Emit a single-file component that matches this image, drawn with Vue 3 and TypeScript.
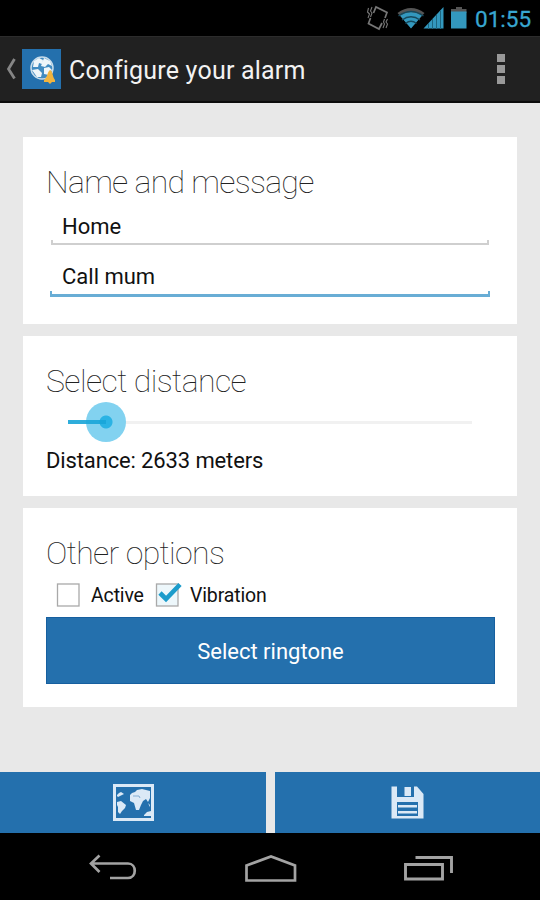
<script setup lang="ts">
import { ref, computed } from 'vue'

const name = ref('Home')
const message = ref('Call mum')
const distance = ref(2633)
const maxDistance = 28000
const progress = computed(() => `${(distance.value / maxDistance) * 100}%`)
const options = ref([
  { label: 'Active', checked: false },
  { label: 'Vibration', checked: true },
])
</script>

<template>
  <div class="screen">
    <header class="status">
      <svg class="status-icons" width="110" height="36" viewBox="0 0 110 36">
        <g fill="none" stroke="#777">
          <path d="M11.500 13 L14 7 L25 12.500 L23 18 M8.500 18 L6.500 23.500 L17 29 L20 23" stroke-width="1.700" />
          <path d="M6.500 8 L5.500 12 L7.500 14 L6 18 M10 7 L8.500 11 L10 13 L8.500 17 M22.500 19 L21.500 22 L22.500 24 L21 28 M25.500 19 L24 22 L25.500 24 L24 28" stroke-width="1.100" />
        </g>
        <path d="M35.500 13 Q49 3 62.500 13 L49 28 Z" fill="#555" />
        <path d="M38 15.500 Q49 8.500 60 15.500 L49 28.500 Z" fill="#3398be" />
        <path d="M36.500 16 Q49 7 61.500 16 M40 20 Q49 13.500 58 20 M43.500 23.500 Q49 19 54.500 23.500" fill="none" stroke="#16495c" stroke-width="1.300" />
        <path d="M61.500 28.500 L81.500 7 V28.500 Z" fill="#3398be" />
        <path d="M66.500 23 V29 M70.500 19 V29 M74.500 15 V29 M78.500 11 V29" stroke="#1d6680" />
        <path d="M94 7 H100 V9 H104.500 V13 H89 V9 H94 Z" fill="#555" />
        <path d="M89 11.500 H104.500 V28.500 H89 Z" fill="#3398be" />
      </svg>
      <span class="clock">01:55</span>
    </header>

    <header class="bar">
      <svg class="back" width="10" height="22" viewBox="0 0 10 22"><path d="M8.500 1 L2.500 11 L8.500 20.500" fill="none" stroke="#858585" stroke-width="2.800" /></svg>
      <svg class="logo" width="39" height="40" viewBox="0 0 39 40">
        <rect width="39" height="40" fill="#2470ad" />
        <circle cx="20" cy="19" r="11" fill="#418bc1" stroke="#c7dbe9" stroke-width="1.500" />
        <path d="M12 12 L17 9 L21 11 L20 15 L17 14 L16 18 L11 18 Z M22 9 L28 12 L30 17 L26 15 L23 18 L19 17 Z M10 21 L16 20 L20 24 L19 28 L15 28 Z M22 19 L27 18 L30 21 L27 26 L22 25 Z" fill="#eef5f9" />
        <path d="M28 21 C31 22 30 27 33 31 V33 H30 L28 35 L26 33 H22 V31 C26 28 25 23 28 21 Z" fill="#f1b43e" />
      </svg>
      <h1>Configure your alarm</h1>
      <div class="overflow"><i></i><i></i><i></i></div>
    </header>

    <main>
      <section class="card details">
        <h2 class="h-name">Name and message</h2>
        <div class="field"><span>{{ name }}</span></div>
        <div class="field focused"><span>{{ message }}</span></div>
      </section>

      <section class="card distance">
        <h2 class="h-distance">Select distance</h2>
        <div class="slider">
          <div class="thumb" :style="{ left: progress }"></div>
          <div class="fill" :style="{ width: progress }"></div>
        </div>
        <p>Distance: {{ distance }} meters</p>
      </section>

      <section class="card options">
        <h2 class="h-options">Other options</h2>
        <div class="checks">
          <label v-for="o in options" :key="o.label" @click="o.checked = !o.checked">
            <svg width="30" height="30" viewBox="0 0 30 30">
              <rect x="3.500" y="4" width="21.500" height="22" :fill="o.checked ? '#edf7fb' : '#fff'" stroke="#a9a9a9" stroke-width="1.300" />
              <path v-if="o.checked" d="M7 13 L13 19 L27 4.500" fill="none" stroke="#1c9ccb" stroke-width="4.600" />
            </svg>
            <span>{{ o.label }}</span>
          </label>
        </div>
        <button class="ringtone">Select ringtone</button>
      </section>
    </main>

    <footer class="actions">
      <button>
        <svg width="41" height="37" viewBox="0 0 41 37">
          <rect x="1.500" y="1.500" width="38" height="34" fill="none" stroke="#dbe9f6" stroke-width="3" />
          <g fill="#dbe9f6">
            <path d="M4 11 L6 9 L8 8 L11 10 L9 11 L7 12 L5 13 L4 12 Z" />
            <path d="M4 18 L8 17 L13 21 L12 24 L9 27 L7 30 L5 28 L5 23 L4 21 Z" />
            <path d="M17 11 L19 9 L22 8 L24 6 L29 5 L37 7 V14 L35 18 L33 15 L30 17 L28 21 L26 26 L23 26 L21 19 L17 17 Z" />
            <path d="M31 31 L34 28 L38 27 V32 H31 Z M35 19 L37 21 V23 Z" />
          </g>
          <path d="M20 12 H26 L27 14" fill="none" stroke="#83add3" />
        </svg>
      </button>
      <button>
        <svg width="33" height="33" viewBox="0 0 33 33">
          <path d="M0.500 0.500 H26 L32.500 8 V32.500 H0.500 Z" fill="#dbe9f6" />
          <path d="M6 0 H23 V11 H6 Z M6 16 H27 V30 H6 Z" fill="#2470ad" />
          <path d="M13.500 1 H20 V10 H13.500 Z M7 19 H26 V21.500 H7 Z M7 25 H26 V27.500 H7 Z" fill="#dbe9f6" />
        </svg>
      </button>
    </footer>

    <nav>
      <svg width="48" height="28" viewBox="0 0 48 28"><path d="M10.500 1.500 L2 9.500 L10.500 18 M2 9.500 H39 C48 9.500 48 24 39 24 H21" fill="none" stroke="#a3a3a3" stroke-width="2.700" /></svg>
      <svg width="52" height="28" viewBox="0 0 52 28"><path d="M1.500 11.500 L26 2.500 L50 11.500 V26.500 H1.500 Z" fill="none" stroke="#a3a3a3" stroke-width="2.700" /></svg>
      <svg width="50" height="28" viewBox="0 0 50 28"><path d="M1.500 10.500 H38.500 V25 H1.500 Z M11.500 3.500 H47.500 V19" fill="none" stroke="#a3a3a3" stroke-width="2.900" /></svg>
    </nav>
  </div>
</template>

<style>
body { margin: 0; background: #000; }
</style>

<style scoped>
.screen { width: 540px; height: 900px; display: flex; flex-direction: column; background: #e8e8e8; font-family: Roboto, "Liberation Sans", sans-serif; overflow: hidden; }
h1, h2, p { margin: 0; white-space: nowrap; }
svg { display: block; flex: none; }
button { border: 0; padding: 0; background: #2470ad; color: #fff; font-family: inherit; }
.status { height: 36px; box-sizing: border-box; background: #000; display: flex; justify-content: flex-end; align-items: center; padding-right: 9px; }
.status-icons { margin-right: 3px; }
.clock { width: 56px; font-size: 22.5px; line-height: 36px; color: #38a7d1; -webkit-text-stroke: 0.3px #38a7d1; padding-top: 2px; }
.bar { height: 67px; box-sizing: border-box; padding: 0 35px 0 6px; background: #212121; border-top: 1px solid #2c2c2c; border-bottom: 2px solid #0c0c0c; display: flex; align-items: center; }
.logo { margin-left: 6px; }
h1 { margin-left: 8px; font-size: 25px; font-weight: 400; letter-spacing: 0.2px; line-height: 32px; color: #f2f2f2; padding-top: 3px; }
.overflow { margin-left: auto; display: flex; flex-direction: column; gap: 3px; }
.overflow i { width: 8px; height: 8px; background: #999; }
main { height: 669px; box-sizing: border-box; padding: 34px 23px 0; display: flex; flex-direction: column; gap: 12px; }
.card { box-sizing: border-box; width: 494px; background: #fff; padding: 25px 23px 0; }
.details { height: 187px; }
.distance { height: 160px; }
.options { height: 199px; }
h2 { height: 40px; line-height: 40px; font-size: 32px; font-weight: 100; color: #222; }
.h-name { letter-spacing: -0.7px; }
.h-distance { letter-spacing: -0.57px; }
.h-options { letter-spacing: -0.62px; }
.field { position: relative; height: 43px; margin: 0 5px 0 5px; box-sizing: border-box; border-bottom: 2px solid #cfcfcf; padding-left: 11px; font-size: 22px; line-height: 50px; color: #111; }
.field::before, .field::after { content: ""; position: absolute; bottom: 0; width: 2px; height: 3px; background: #cfcfcf; }
.field::before { left: 0; }
.field::after { right: 0; }
.field.focused { height: 49px; margin: 3px 4px 0 4px; padding-left: 12px; line-height: 58px; border-bottom: 3px solid #68add5; }
.focused::before, .focused::after { background: #68add5; }
.slider { position: relative; width: 404px; height: 3px; margin: 20px 0 0 22px; background: #f1f1f1; }
.fill { height: 4px; top: -1px; background: #18a5d8; position: absolute; }
.thumb { position: absolute; top: -19px; width: 40px; height: 40px; margin-left: -20px; border-radius: 50%; background: radial-gradient(circle, #2bb3e4 0 6px, #82d2f0 7px); }
.fill { opacity: 0.9; }
.distance p { margin-top: 22px; font-size: 22px; letter-spacing: -0.13px; line-height: 30px; color: #111; }
.checks { display: flex; height: 44px; align-items: center; margin-left: 8px; }
.checks label { display: flex; align-items: center; width: 99px; font-size: 19.5px; letter-spacing: -0.15px; color: #111; }
.checks span { margin-left: 7px; }
.ringtone { display: block; box-sizing: border-box; width: 449px; height: 67px; padding-top: 2px; font-size: 22px; border: 1px solid #165f9f; }
.actions { height: 61px; display: grid; grid-template-columns: 266px 265px; gap: 9px; }
.actions button { display: flex; align-items: center; justify-content: center; }
nav { height: 67px; background: #000; box-sizing: border-box; padding: 2px 86px 0 89px; display: flex; justify-content: space-between; align-items: center; }
</style>
